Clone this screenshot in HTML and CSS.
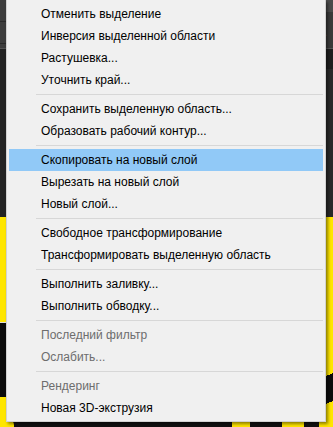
FILE: index.html
```html
<!DOCTYPE html>
<html lang="ru">
<head>
    <meta charset="UTF-8">
    <meta name="viewport" content="width=device-width, initial-scale=1.0">
    <title>Контекстное меню</title>
    <link rel="stylesheet" href="styles.css">
</head>
<body>
    <div class="workspace">
        <div class="strip strip-left">
            <div class="panel-top"></div>
            <div class="dark"></div>
            <div class="yellow"></div>
            <div class="black"></div>
            <div class="yellow grow"></div>
        </div>
        <div class="strip strip-right">
            <div class="panel-top"><span>р.</span></div>
            <div class="dark"></div>
            <div class="yellow grow"></div>
        </div>
        <div class="bottom-bits">
            <span class="spot spot-a"></span>
            <span class="spot spot-b"></span>
            <span class="spot spot-c"></span>
        </div>

        <ul class="menu">
            <li class="item">Отменить выделение</li>
            <li class="item">Инверсия выделенной области</li>
            <li class="item">Растушевка...</li>
            <li class="item">Уточнить край...</li>
            <li class="sep"></li>
            <li class="item">Сохранить выделенную область...</li>
            <li class="item">Образовать рабочий контур...</li>
            <li class="sep"></li>
            <li class="item active">Скопировать на новый слой</li>
            <li class="item">Вырезать на новый слой</li>
            <li class="item">Новый слой...</li>
            <li class="sep"></li>
            <li class="item">Свободное трансформирование</li>
            <li class="item">Трансформировать выделенную область</li>
            <li class="sep"></li>
            <li class="item">Выполнить заливку...</li>
            <li class="item">Выполнить обводку...</li>
            <li class="sep"></li>
            <li class="item disabled">Последний фильтр</li>
            <li class="item disabled">Ослабить...</li>
            <li class="sep"></li>
            <li class="item disabled">Рендеринг</li>
            <li class="item">Новая 3D-экструзия</li>
        </ul>
    </div>
</body>
</html>
```

FILE: styles.css
```css
body {
    margin: 0;
    background-color: #111;
    font-family: "Liberation Sans", Arial, sans-serif;
}
.workspace {
    position: relative;
    width: 333px;
    height: 427px;
    overflow: hidden;
    background-color: #111;
}

/* what shows around the menu */
.strip {
    position: absolute;
    top: 0;
    bottom: 0;
    display: flex;
    flex-direction: column;
}
.strip-left {
    left: 0;
    width: 8px;
}
.strip-right {
    right: 0;
    width: 14px;
}
.panel-top {
    height: 48px;
    background: repeating-linear-gradient(#3d3d3d 0 21px, #2a2a2a 21px 22px);
    border-bottom: 1px solid #555;
}
.strip-right .panel-top {
    background: linear-gradient(#4b4b4b 0 12px, #3a3a3a 12px);
    color: #8a8a8a;
    font-size: 12px;
    line-height: 20px;
    padding-top: 22px;
    height: 26px;
    box-sizing: content-box;
}
.strip-right .panel-top span {
    margin-left: -2px;
}
.dark {
    height: 168px;
    background-color: #232323;
}
.strip-right .dark {
    background: linear-gradient(#1f1f1f 0 20px, #2a2a2a 20px);
}
.yellow {
    height: 105px;
    background-color: #ffe600;
}
.black {
    height: 74px;
    background-color: #0c0c0c;
    border-top: 1px solid #ddd;
}
.grow {
    flex: 1;
}
.strip-right .yellow {
    background: linear-gradient(160deg, #ffe600 0 75%, #0c0c0c 75% 88%, #ffe600 88%);
}
.bottom-bits {
    position: absolute;
    left: 0;
    right: 0;
    bottom: 0;
    height: 8px;
}
.spot {
    position: absolute;
    bottom: 0;
    height: 8px;
    background-color: #ffe600;
}
.spot-a { left: 0; width: 14px; border-radius: 0 6px 0 0; }
.spot-b { left: 232px; width: 18px; }
.spot-c { left: 282px; width: 22px; }

/* the context menu */
.menu {
    position: absolute;
    left: 6px;
    top: 0;
    width: 314px;
    margin: 0;
    padding: 3px 2px 2px;
    list-style: none;
    background-color: #f0f0f0;
    border: 1px solid #d2d2d2;
    border-top: none;
    box-shadow: 2px 2px 3px rgba(0, 0, 0, 0.45);
    font-size: 12px;
    color: #000;
}
.item {
    height: 22px;
    line-height: 22px;
    padding-left: 32px;
    white-space: nowrap;
}
.item.active {
    background-color: #91c9f7;
}
.item.disabled {
    color: #6d6d6d;
}
.sep {
    height: 1px;
    margin: 3px 0 3px 27px;
    background-color: #d7d7d7;
}
```
